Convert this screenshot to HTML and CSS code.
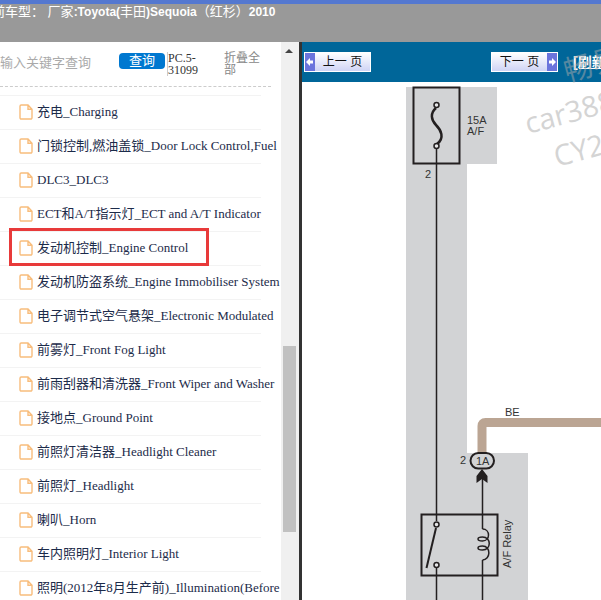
FILE: index.html
```html
<!DOCTYPE html>
<html lang="zh-CN">
<head>
    <meta charset="UTF-8">
    <meta name="viewport" content="width=device-width, initial-scale=1.0">
    <title>Toyota(丰田)Sequoia（红杉）2010</title>
    <link rel="stylesheet" href="styles.css">
</head>
<body>
    <svg class="symbols" aria-hidden="true">
        <symbol id="file" viewBox="0 0 14 16">
            <path d="M2.200 1H9l4 4.300v8.500a1.200 1.200 0 0 1-1.200 1.200H2.200A1.200 1.200 0 0 1 1 13.800V2.200A1.200 1.200 0 0 1 2.200 1zM9 1v4.300h4" fill="none" stroke="#f8bd7c" stroke-width="1.400"/>
        </symbol>
    </svg>
    <header class="header">
        <div class="title"><span class="cjk">前车型： 厂家</span>:Toyota(<span class="cjk">丰田</span>)Sequoia<span class="cjk">（红杉）</span>2010</div>
    </header>
    <div class="main">
        <aside class="sidebar">
            <form class="search" onsubmit="return false;">
                <input class="keyword" type="text" placeholder="输入关键字查询" aria-label="输入关键字查询">
                <button class="btn" type="submit">查询</button>
                <span class="version">PC.5-31099</span>
                <a class="fold" href="#">折叠全部</a>
            </form>
            <ul class="list">
                <li><a href="#"><svg class="icon"><use href="#file"/></svg>充电_Charging</a></li>
                <li><a href="#"><svg class="icon"><use href="#file"/></svg>门锁控制,燃油盖锁_Door Lock Control,Fuel</a></li>
                <li><a href="#"><svg class="icon"><use href="#file"/></svg>DLC3_DLC3</a></li>
                <li><a href="#"><svg class="icon"><use href="#file"/></svg>ECT和A/T指示灯_ECT and A/T Indicator</a></li>
                <li class="marked"><a href="#"><svg class="icon"><use href="#file"/></svg>发动机控制_Engine Control</a></li>
                <li><a href="#"><svg class="icon"><use href="#file"/></svg>发动机防盗系统_Engine Immobiliser System</a></li>
                <li><a href="#"><svg class="icon"><use href="#file"/></svg>电子调节式空气悬架_Electronic Modulated</a></li>
                <li><a href="#"><svg class="icon"><use href="#file"/></svg>前雾灯_Front Fog Light</a></li>
                <li><a href="#"><svg class="icon"><use href="#file"/></svg>前雨刮器和清洗器_Front Wiper and Washer</a></li>
                <li><a href="#"><svg class="icon"><use href="#file"/></svg>接地点_Ground Point</a></li>
                <li><a href="#"><svg class="icon"><use href="#file"/></svg>前照灯清洁器_Headlight Cleaner</a></li>
                <li><a href="#"><svg class="icon"><use href="#file"/></svg>前照灯_Headlight</a></li>
                <li><a href="#"><svg class="icon"><use href="#file"/></svg>喇叭_Horn</a></li>
                <li><a href="#"><svg class="icon"><use href="#file"/></svg>车内照明灯_Interior Light</a></li>
                <li><a href="#"><svg class="icon"><use href="#file"/></svg>照明(2012年8月生产前)_Illumination(Before</a></li>
            </ul>
        </aside>
        <div class="scrollbar">
            <svg class="arrow" viewBox="0 0 8 4"><path d="M0 4L4 0l4 4z" fill="#444"/></svg>
            <div class="thumb"></div>
        </div>
        <section class="viewer">
            <nav class="toolbar">
                <button class="page-btn prev" type="button">
                    <svg class="page-arrow" viewBox="0 0 10 16"><path d="M1 8l4-4v2.500h3v3H5V12z" fill="#fff"/></svg>
                    <span>上一 页</span>
                </button>
                <button class="page-btn next" type="button">
                    <span>下一 页</span>
                    <svg class="page-arrow" viewBox="0 0 10 16"><path d="M9 8L5 4v2.500H2v3h3V12z" fill="#fff"/></svg>
                </button>
                <a class="refresh" href="#">[刷新]</a>
            </nav>
            <svg class="diagram" width="320" height="518" viewBox="302 82 320 518">
                <!-- shaded area -->
                <path d="M406 87h91v77h-30v289h61v147H406z" fill="#d2d3d5"/>
                <g fill="none" stroke="#231f20" stroke-width="2">
                    <!-- fuse -->
                    <rect x="413.500" y="87.500" width="46" height="76"/>
                    <path d="M436 108c-6 5-5 12 0 17s9 13 1 19" stroke-width="2.500"/>
                    <path d="M436.500 149v372M436.500 568v32M482.500 478v51M482.500 560v40" stroke-width="1.500"/>
                    <!-- relay -->
                    <rect x="421.500" y="514.500" width="76" height="61"/>
                    <path d="M436 528l-9.500 40"/>
                    <path d="M482.500 529c8 0 8 12 0 12c-6 0-6-4 0-4c9 0 9 13 0 13c-6 0-6-4 0-4c9 0 8 14 0 14" stroke-width="1.500"/>
                    <g fill="#e8e8e9" stroke-width="1.500">
                        <circle cx="436.500" cy="105" r="2.500"/>
                        <circle cx="436.500" cy="146" r="2.500"/>
                        <circle cx="436.500" cy="524.500" r="2.500"/>
                        <circle cx="436.500" cy="565" r="2.500"/>
                    </g>
                    <!-- wire to connector 1A -->
                    <path d="M482 453v-27q0-3.500 3.500-3.500H622" stroke="#bba593" stroke-width="9"/>
                    <rect x="470.500" y="453" width="23.500" height="15.500" rx="7.700" fill="#d2d3d5"/>
                    <path d="M482 469l5.500 7v7l-5.500-4-5.500 4v-7z" fill="#231f20" stroke="none"/>
                </g>
                <g class="labels">
                    <text x="467" y="124">15A</text>
                    <text x="467" y="135">A/F</text>
                    <text x="425" y="178">2</text>
                    <text x="505" y="416">BE</text>
                    <text x="460" y="464">2</text>
                    <text x="476" y="465">1A</text>
                    <text transform="translate(511 568) rotate(-90)">A/F Relay</text>
                </g>
            </svg>
            <div class="watermark">
                <svg width="320" height="518" viewBox="302 42 320 518">
                    <g class="stamp">
                        <text transform="translate(567 82) rotate(-15)">畅易</text>
                        <text transform="translate(528 134) rotate(-15)">car388</text>
                        <text transform="translate(557 167) rotate(-15)">CY21</text>
                    </g>
                </svg>
            </div>
        </section>
    </div>
</body>
</html>
```
FILE: styles.css
```css
*, *::after {
    box-sizing: border-box;
}
body {
    margin: 0;
    height: 100vh;
    display: flex;
    flex-direction: column;
    overflow: hidden;
    font-family: "Liberation Serif", "Noto Sans CJK SC", serif;
    font-size: 13px;
    background-color: #fff;
}
.symbols {
    display: none;
}
.header {
    flex: none;
    height: 42px;
    overflow: hidden;
    border-top: 4px solid #5478d0;
    background-color: #999;
}
.title {
    margin-left: -8px;
    font: bold 12px/16px "Liberation Sans", "Noto Sans CJK SC", sans-serif;
    color: #fff;
    white-space: pre;
}
.title .cjk {
    font-size: 13px;
    font-weight: normal;
}
.main {
    flex: 1;
    min-height: 0;
    display: flex;
}
.sidebar {
    flex: none;
    width: 281px;
    overflow: hidden;
}
.search {
    display: flex;
    align-items: flex-start;
    height: 45px;
    margin-right: 10px;
    padding-top: 10px;
    border-bottom: 1px dashed #ccc;
}
.keyword {
    width: 119px;
    height: 20px;
    padding: 0;
    border: none;
    outline: none;
    font: 13px "Liberation Sans", "Noto Sans CJK SC", sans-serif;
}
.keyword::placeholder {
    color: #aaa;
}
.btn {
    width: 46px;
    height: 16px;
    margin-top: 1px;
    padding: 0;
    border: none;
    border-radius: 4px;
    background-color: #0078d0;
    color: #fff;
    font: 13px/14px "Liberation Sans", "Noto Sans CJK SC", sans-serif;
    cursor: pointer;
}
.version {
    width: 34px;
    margin-left: 2px;
    border-left: 1px solid #ccc;
    font-size: 12px;
    line-height: 12px;
    color: #333;
}
.fold {
    width: 38px;
    margin-left: 23px;
    font-size: 12px;
    line-height: 12px;
    color: #888;
    text-decoration: none;
}
.list {
    margin: 8px 0 0;
    padding: 0;
    list-style: none;
}
.list li {
    position: relative;
    height: 34px;
    background: linear-gradient(#f3f3f3, #f3f3f3) no-repeat 0 0 / 261px 1px;
}
.list a {
    display: flex;
    align-items: center;
    height: 34px;
    padding-left: 19px;
    line-height: 16px;
    color: #1c2b4a;
    text-decoration: none;
    white-space: nowrap;
}
.icon {
    flex: none;
    width: 14px;
    height: 16px;
    margin-right: 4px;
}
.marked::after {
    content: "";
    position: absolute;
    top: -3px;
    left: 9px;
    width: 200px;
    height: 38px;
    border: 3px solid #e83a3a;
    z-index: 1;
}
.scrollbar {
    flex: none;
    display: flex;
    flex-direction: column;
    align-items: center;
    width: 21px;
    padding-right: 2px;
    border-right: 3px solid #333;
    background-color: #f0f0f0;
}
.arrow {
    width: 8px;
    height: 4px;
    margin-top: 7px;
}
.thumb {
    flex: 0 0 186px;
    width: 13px;
    margin: auto 0 68px;
    background-color: #c1c1c1;
}
.viewer {
    flex: 1;
    min-width: 0;
    position: relative;
    overflow: hidden;
}
.toolbar {
    display: flex;
    align-items: center;
    height: 40px;
    padding-left: 2px;
    background-color: #069;
}
.page-btn {
    flex: none;
    display: flex;
    align-items: center;
    width: 67px;
    height: 20px;
    padding: 0;
    border: 1px solid #fff;
    background: linear-gradient(#fff, #cfd4f5);
    color: #111;
    font: 12px/16px "Liberation Sans", "Noto Sans CJK SC", sans-serif;
    cursor: pointer;
}
.page-btn span {
    flex: 1;
}
.page-arrow {
    width: 10px;
    height: 18px;
    background-color: #6b74dc;
}
.next {
    margin-left: 120px;
}
.refresh {
    flex: none;
    margin-left: 15px;
    color: #fff;
    font: bold 14px/20px "Liberation Sans", "Noto Sans CJK SC", sans-serif;
}
.diagram {
    display: block;
}
.labels {
    font: 11px "Liberation Sans", sans-serif;
    fill: #333;
}
.watermark {
    position: absolute;
    top: 0;
    left: 0;
    pointer-events: none;
}
.stamp {
    font: 29px "Open Sans", "Noto Sans CJK SC", sans-serif;
    fill: #aaa;
    opacity: 0.5;
}
```
